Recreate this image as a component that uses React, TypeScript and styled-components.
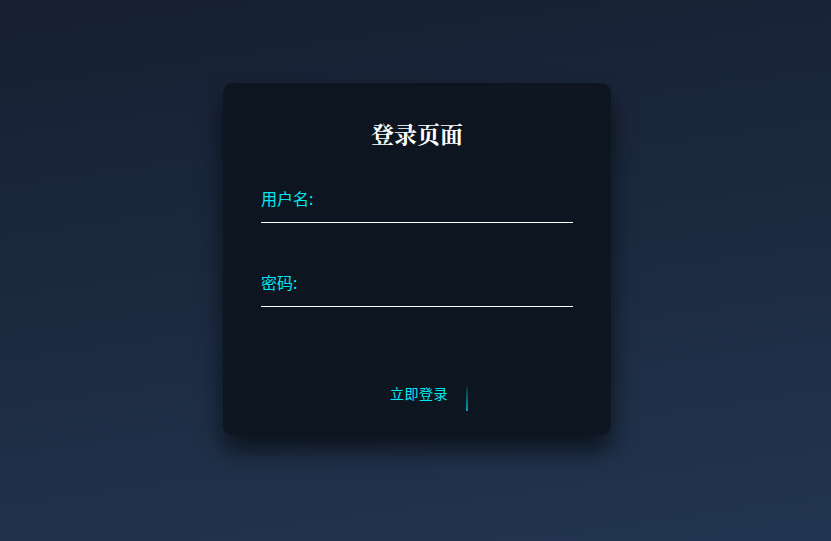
import React, { useState } from "react";
import styled, { createGlobalStyle } from "styled-components";

const GlobalStyle = createGlobalStyle`
  html, body {
    margin: 0;
    padding: 0;
  }
  body {
    min-height: 100vh;
    background: linear-gradient(172deg, #161f31 0%, #1c2a40 50%, #223550 100%);
    font-family: "Noto Sans", "Noto Sans CJK SC", sans-serif;
  }
`;

const Page = styled.div`
  min-height: 100vh;
  display: flex;
  justify-content: center;
  align-items: flex-start;
  padding: 83px 0 0 3px;
  box-sizing: border-box;
`;

const Card = styled.form`
  width: 388px;
  box-sizing: border-box;
  padding: 36px 38px 21px 38px;
  background: #0c1520;
  border-radius: 10px;
  box-shadow: 0 15px 25px rgba(0, 0, 0, 0.6);
  display: flex;
  flex-direction: column;
`;

const Title = styled.h2`
  margin: 0 0 34px 0;
  font-family: "Noto Serif CJK SC", "Noto Sans CJK SC", serif;
  font-size: 23px;
  font-weight: 700;
  line-height: 30px;
  color: #fff;
  text-align: center;
`;

const Field = styled.div`
  position: relative;
  margin-bottom: ${(p: { $last?: boolean }) => (p.$last ? "67px" : "44px")};
`;

const Input = styled.input`
  display: block;
  width: 100%;
  box-sizing: border-box;
  height: 40px;
  padding: 10px 0;
  font-size: 16px;
  color: #fff;
  background: transparent;
  border: none;
  border-bottom: 1px solid #fff;
  outline: none;
`;

const Label = styled.label`
  position: absolute;
  top: 0;
  left: 0;
  padding: 5px 0;
  font-size: 16px;
  line-height: 22px;
  color: #03e9f4;
  pointer-events: none;
`;

const Actions = styled.div`
  display: flex;
  justify-content: center;
`;

const LoginBtn = styled.button`
  position: relative;
  overflow: hidden;
  margin-left: 4px;
  height: 40px;
  padding: 0 20px 2px 20px;
  font-family: "Noto Sans CJK SC", sans-serif;
  font-size: 14px;
  letter-spacing: 0.5px;
  color: #03e9f4;
  background: transparent;
  border: none;
  cursor: pointer;
  &:hover {
    background: #03e9f4;
    color: #fff;
    border-radius: 5px;
    box-shadow: 0 0 5px #03e9f4, 0 0 25px #03e9f4;
    transition: 0.5s;
  }
`;

const Glow = styled.span`
  position: absolute;
  right: 0;
  top: 13px;
  width: 2px;
  height: 24px;
  background: linear-gradient(180deg, rgba(3, 233, 244, 0.12), rgba(3, 233, 244, 0.65));
`;

function App() {
  const [user, setUser] = useState("");
  const [pw, setPw] = useState("");

  return (
    <>
      <GlobalStyle />
      <Page>
        <Card onSubmit={(e) => e.preventDefault()}>
          <Title>登录页面</Title>
          <Field>
            <Input id="user" type="text" value={user} onChange={(e) => setUser(e.target.value)} />
            {user === "" ? <Label htmlFor="user">用户名:</Label> : null}
          </Field>
          <Field $last>
            <Input id="pw" type="password" value={pw} onChange={(e) => setPw(e.target.value)} />
            {pw === "" ? <Label htmlFor="pw">密码:</Label> : null}
          </Field>
          <Actions>
            <LoginBtn type="submit">
              立即登录
              <Glow />
            </LoginBtn>
          </Actions>
        </Card>
      </Page>
    </>
  );
}

export default App;
